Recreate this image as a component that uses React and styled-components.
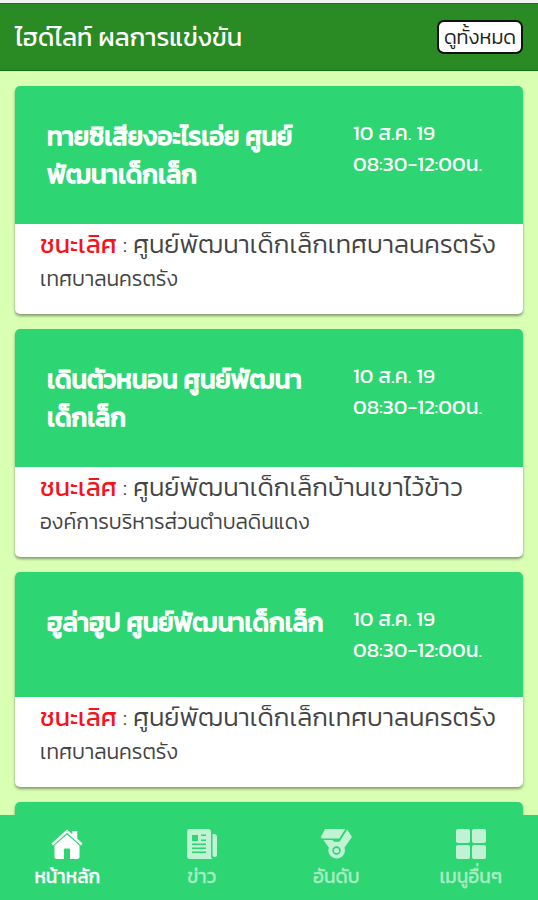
import React from "react";
import styled, { createGlobalStyle } from "styled-components";

const GlobalStyle = createGlobalStyle`
  * {
    box-sizing: border-box;
  }
  body {
    margin: 0;
    font-family: Kanit, "Noto Sans Thai", "Noto Sans", "Open Sans", sans-serif;
  }
`;

const results = [
  {
    title: ["ทายซิเสียงอะไรเอ่ย ศูนย์", "พัฒนาเด็กเล็ก"],
    winner: "ศูนย์พัฒนาเด็กเล็กเทศบาลนครตรัง",
    place: "เทศบาลนครตรัง",
  },
  {
    title: ["เดินตัวหนอน ศูนย์พัฒนา", "เด็กเล็ก"],
    winner: "ศูนย์พัฒนาเด็กเล็กบ้านเขาไว้ข้าว",
    place: "องค์การบริหารส่วนตำบลดินแดง",
  },
  {
    title: ["ฮูล่าฮูป ศูนย์พัฒนาเด็กเล็ก"],
    winner: "ศูนย์พัฒนาเด็กเล็กเทศบาลนครตรัง",
    place: "เทศบาลนครตรัง",
  },
];

const HomeIcon = () => (
  <svg width="32" height="30" viewBox="0 0 32 30" fill="currentColor">
    <path d="M16 0.5 0.5 14.6 2 16.4 16 3.8 30 16.4 31.5 14.6 26.3 9.8V2H21.3V5.3Z" />
    <path d="M16 5.4 3.5 16.6V28q0 2 2 2H13V20.5q0-1 1-1h4q1 0 1 1V30h7.5q2 0 2-2V16.6Z" />
  </svg>
);

const NewsIcon = () => (
  <svg width="30" height="30" viewBox="0 0 30 30" fill="currentColor">
    <path
      fillRule="evenodd"
      d="M3 0H21q3 0 3 3V27q0 1.800 1.300 3H3q-3 0-3-3V3Q0 0 3 0ZM5 6v6h6V6ZM14 5.500v1.500h5V5.500ZM14 10.500v1.500h5v-1.500ZM5 14.500v1.500h14v-1.500ZM5 18.500v1.500h14v-1.500ZM5 22.500v1.500h14v-1.500Z"
    />
    <path d="M25.5 5H27q3 0 3 3V26q0 2-2.200 2t-2.300-2Z" />
  </svg>
);

const MedalIcon = () => (
  <svg width="31" height="30" viewBox="0 0 31 30" fill="currentColor">
    <path d="M4 0H24.3L18.3 9.500H0.800L0 8Z" />
    <path d="M26.3 0.500 31 8 23.500 18.500A8.300 8.300 0 1 1 7.800 18.500L2.300 11H11.500L13 12.800H18.500Z" />
    <circle cx="15.5" cy="21.500" r="3.400" fill="none" stroke="#2ed573" strokeWidth="1.600" />
  </svg>
);

const GridIcon = () => (
  <svg width="30" height="30" viewBox="0 0 30 30" fill="currentColor">
    <rect width="14" height="14" rx="2" />
    <rect x="16" width="14" height="14" rx="2" />
    <rect y="16" width="14" height="14" rx="2" />
    <rect x="16" y="16" width="14" height="14" rx="2" />
  </svg>
);

const tabs = [
  { label: "หน้าหลัก", icon: HomeIcon },
  { label: "ข่าว", icon: NewsIcon },
  { label: "อันดับ", icon: MedalIcon },
  { label: "เมนูอื่นๆ", icon: GridIcon },
];

const ResultCard = ({ result }) => (
  <Card>
    <CardTop $lines={result.title.length}>
      <Title>
        {result.title.map((line) => (
          <TitleLine key={line}>{line}</TitleLine>
        ))}
      </Title>
      <When>
        <div>10 ส.ค. 19</div>
        <div>08:30-12:00น.</div>
      </When>
    </CardTop>
    <CardBody>
      <Winner>
        <WinnerLabel>ชนะเลิศ</WinnerLabel>
        <Colon>:</Colon>
        <span>{result.winner}</span>
      </Winner>
      <Place>{result.place}</Place>
    </CardBody>
  </Card>
);

const App = () => {
  const [active, setActive] = React.useState(0);

  return (
    <>
      <GlobalStyle />
      <Screen>
        <Header>
          <HeaderTitle>ไฮด์ไลท์ ผลการแข่งขัน</HeaderTitle>
          <AllButton>ดูทั้งหมด</AllButton>
        </Header>
        <List>
          {results.map((result, i) => (
            <ResultCard key={i} result={result} />
          ))}
          <Card>
            <CardTop $lines={1} />
          </Card>
        </List>
        <TabBar>
          {tabs.map(({ label, icon: Icon }, i) => (
            <Tab key={label} $active={i === active} onClick={() => setActive(i)}>
              <Icon />
              <TabLabel $active={i === active}>{label}</TabLabel>
            </Tab>
          ))}
        </TabBar>
      </Screen>
    </>
  );
};

const Screen = styled.div`
  display: flex;
  flex-direction: column;
  height: 900px;
  overflow: hidden;
  background: #d9ffb3;
`;

const Header = styled.header`
  display: flex;
  flex: none;
  align-items: center;
  justify-content: space-between;
  height: 71px;
  padding: 0 15px;
  border-top: 3px solid #f4f4f4;
  border-bottom: 1px solid #12790f;
  background: #2a8a24;
  box-shadow: inset 0 1px #12790f;
`;

const HeaderTitle = styled.div`
  font-size: 25.4px;
  line-height: 36px;
  color: #fff;
  white-space: nowrap;
`;

const AllButton = styled.button`
  width: 86px;
  height: 34px;
  padding: 0;
  border: 2px solid #111;
  border-radius: 7px;
  background: #fff;
  font: inherit;
  font-size: 20px;
  font-weight: 300;
  line-height: 28px;
  color: #222;
  white-space: nowrap;
`;

const List = styled.main`
  display: flex;
  flex: 1;
  flex-direction: column;
  gap: 15px;
  min-height: 0;
  padding: 15px 15px 0;
  overflow: hidden;
`;

const Card = styled.article`
  flex: none;
  overflow: hidden;
  border-radius: 5px;
  background: #fff;
  box-shadow: 0 2px 3px rgba(0, 0, 0, 0.4);
`;

const CardTop = styled.div`
  display: flex;
  height: ${(props) => (props.$lines > 1 ? 138 : 124.5)}px;
  padding: 31px 32px 0;
  background: #2ed573;
  color: #fff;
`;

const Title = styled.h2`
  width: 306px;
  margin: 0;
  font-size: 25.7px;
  font-weight: 400;
  line-height: 38px;
  -webkit-text-stroke: 1.3px currentColor;
`;

const TitleLine = styled.div`
  white-space: nowrap;
`;

const When = styled.div`
  font-size: 21px;
  line-height: 31px;
  white-space: nowrap;
`;

const CardBody = styled.div`
  height: 90px;
  padding: 0 25px;
  font-weight: 300;
  color: #444;
`;

const Winner = styled.div`
  display: flex;
  font-size: 25.6px;
  line-height: 40px;
  white-space: nowrap;
`;

const WinnerLabel = styled.span`
  width: 77px;
  font-size: 25.2px;
  font-weight: 400;
  color: #f5141c;
`;

const Colon = styled.span`
  width: 16px;
  text-align: center;
`;

const Place = styled.div`
  font-size: 21px;
  line-height: 30px;
  white-space: nowrap;
`;

const TabBar = styled.nav`
  display: grid;
  flex: none;
  grid-template-columns: repeat(4, 1fr);
  height: 85px;
  background: #2ed573;
`;

const Tab = styled.button`
  display: flex;
  flex-direction: column;
  align-items: center;
  padding: 14px 0 0;
  border: 0;
  background: none;
  font: inherit;
  color: ${(props) => (props.$active ? "#fff" : "#c0f2d4")};
`;

const TabLabel = styled.span`
  margin-top: 1px;
  font-size: 19px;
  line-height: 34px;
  color: ${(props) => (props.$active ? "#fff" : "#a4edc2")};
  -webkit-text-stroke: 0.3px currentColor;
  white-space: nowrap;
`;

export default App;
